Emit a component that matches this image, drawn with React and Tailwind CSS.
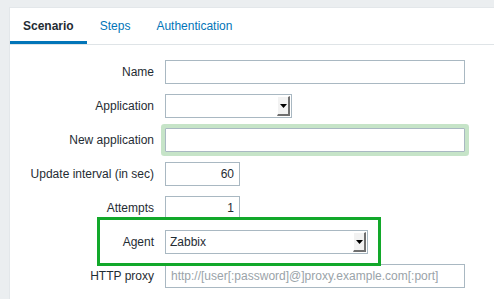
import React from "react";

const tabs = [
  { name: "Scenario", active: true },
  { name: "Steps" },
  { name: "Authentication" },
];

const Arrow = () => (
  <svg width="7" height="4" viewBox="0 0 7 4" className="block">
    <path d="M0 0h7L3.5 4z" fill="#000" />
  </svg>
);

const Select = ({ width, value }) => (
  <div
    className={`flex h-[24px] ${width} border border-[#a9b8c2] bg-white`}
  >
    <div className="flex-1 pl-[4px] leading-[22px] text-[#1f2c33]">{value}</div>
    <div className="my-[1px] mr-[1px] flex w-[13px] items-center justify-center border-t border-l border-t-white border-l-white border-r-2 border-b-2 border-r-[#6f6f6f] border-b-[#6f6f6f] bg-[#f2f2f2]">
      <Arrow />
    </div>
  </div>
);

const Input = ({ width, value, placeholder, right, glow }) => (
  <div
    className={`h-[24px] ${width} border border-[#a9b8c2] bg-white ${
      glow ? "shadow-[0_0_0_4px_#c6e4c8] rounded-[1px]" : ""
    } ${right ? "text-right pr-[5px]" : "pl-[5px]"} leading-[22px]`}
  >
    {value ? (
      <span className="text-[#1f2c33]">{value}</span>
    ) : (
      <span className="text-[#9aa3a9]">{placeholder}</span>
    )}
  </div>
);

const Row = ({ label, children }) => (
  <div className="flex items-center h-[24px]">
    <div className="w-[144px] pr-[0px] text-right text-[#1f2c33]">{label}</div>
    <div className="ml-[11px]">{children}</div>
  </div>
);

export default function App() {
  return (
    <div
      className="w-[494px] h-[299px] overflow-hidden bg-[#ebeef0] pl-[9px] pt-[7px] text-[12px]"
      style={{ fontFamily: '"Liberation Sans", Arial, sans-serif' }}
    >
      <div className="relative h-full bg-white border-t border-l border-[#e3e7ea]">
        <div className="flex h-[37px] border-b border-[#dfe4e7]">
          {tabs.map((t) => (
            <div
              key={t.name}
              className={`flex items-center px-[13px] pt-[3px] border-b-[3px] ${
                t.active
                  ? "border-[#0275b8] font-bold text-[#1f2c33]"
                  : "border-transparent text-[#0275b8]"
              }`}
            >
              {t.name}
            </div>
          ))}
        </div>
        <div className="flex flex-col gap-[10px] pt-[15px]">
          <Row label="Name">
            <Input width="w-[300px]" />
          </Row>
          <Row label="Application">
            <Select width="w-[127px]" />
          </Row>
          <Row label="New application">
            <Input width="w-[300px]" glow />
          </Row>
          <Row label="Update interval (in sec)">
            <Input width="w-[75px]" value="60" right />
          </Row>
          <Row label="Attempts">
            <Input width="w-[75px]" value="1" right />
          </Row>
          <Row label="Agent">
            <Select width="w-[203px]" value="Zabbix" />
          </Row>
          <Row label="HTTP proxy">
            <Input
              width="w-[300px]"
              placeholder="http://[user[:password]@]proxy.example.com[:port]"
            />
          </Row>
        </div>
        <div className="absolute left-[87px] top-[209px] w-[284px] h-[49px] border-[3px] border-[#12a82a]" />
      </div>
    </div>
  );
}
